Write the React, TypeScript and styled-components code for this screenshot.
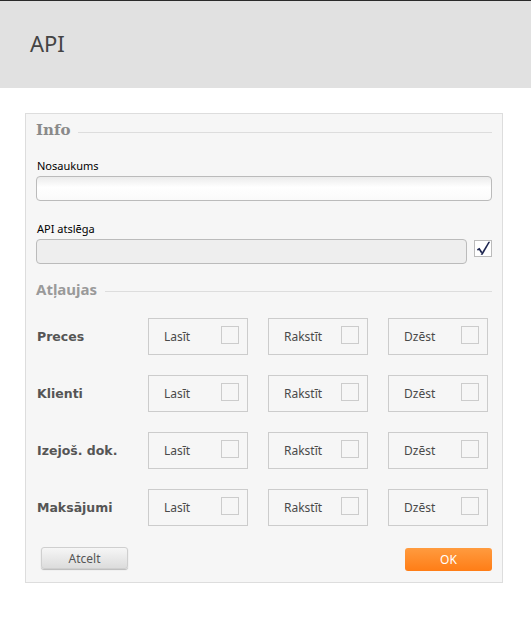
import styled, { createGlobalStyle } from "styled-components";

const GlobalStyle = createGlobalStyle`
  html, body {
    margin: 0;
    padding: 0;
    background: #fff;
    font-family: "Noto Sans", "DejaVu Sans", sans-serif;
  }
`;

const Page = styled.div`
  width: 531px;
  border-top: 1px solid #2a2a2a;
`;

const Header = styled.header`
  height: 87px;
  background-color: #e1e1e1;
  display: flex;
  align-items: center;
  padding: 0 30px;
`;

const Title = styled.h1`
  margin: 0 0 3px 0;
  font-size: 22px;
  font-weight: 400;
  color: #444;
`;

const Panel = styled.section`
  margin: 25px 0 0 25px;
  width: 456px;
  padding: 7px 10px 11px 10px;
  border: 1px solid #dddddd;
  background-color: #f6f6f6;
`;

const Legend = styled.div<{ serif?: boolean }>`
  display: flex;
  align-items: center;
  gap: 8px;
  height: 18px;
  font-family: ${({ serif }) =>
    serif ? `"DejaVu Serif", "Liberation Serif", serif` : `"Noto Sans", "DejaVu Sans", sans-serif`};
  font-size: 15px;
  font-weight: 700;
  color: ${({ serif }) => (serif ? "#8a8a8a" : "#9a9a9a")};

  &::after {
    content: "";
    flex: 1;
    height: 1px;
    margin-top: 4px;
    background-color: #dddddd;
  }
`;

const Label = styled.label<{ top: number }>`
  display: block;
  margin: ${({ top }) => top}px 0 4px 1px;
  font-size: 11px;
  line-height: 13px;
  color: #000;
`;

const TextInput = styled.input<{ locked?: boolean }>`
  box-sizing: border-box;
  display: block;
  width: 100%;
  height: 25px;
  border: 1px solid #bbbbbb;
  border-radius: 4px;
  background: ${({ locked }) =>
    locked ? "#eeeeee" : "linear-gradient(#ececec, #ffffff 45%, #fafafa)"};
  outline: none;
`;

const KeyRow = styled.div`
  display: flex;
  align-items: flex-start;
  gap: 7px;
`;

const KeyCheck = styled.div`
  box-sizing: border-box;
  flex: 0 0 18px;
  height: 17px;
  margin-top: 1px;
  border: 1px solid #bbbbbb;
  background-color: #fff;
  display: flex;
  align-items: center;
  justify-content: center;
`;

const Spacer = styled.div<{ size: number }>`
  height: ${({ size }) => size}px;
`;

const PermSection = styled.div`
  display: flex;
  flex-direction: column;
  gap: 20px;
  margin-top: 20px;
`;

const PermRow = styled.div`
  display: flex;
  align-items: center;
`;

const PermName = styled.div`
  width: 111px;
  padding-left: 1px;
  font-family: "DejaVu Sans", "Noto Sans", sans-serif;
  font-size: 12.5px;
  font-weight: 700;
  color: #555;
`;

const PermBoxes = styled.div`
  display: flex;
  gap: 20px;
`;

const PermBox = styled.label`
  box-sizing: border-box;
  width: 100px;
  height: 37px;
  border: 1px solid #cccccc;
  display: flex;
  justify-content: space-between;
  align-items: center;
  padding: 0 8px 0 15px;
  font-size: 12px;
  color: #4a4a4a;
`;

const Square = styled.span`
  box-sizing: border-box;
  width: 18px;
  height: 18px;
  margin-top: -4px;
  border: 1px solid #cccccc;
`;

const Footer = styled.div`
  display: flex;
  justify-content: space-between;
  align-items: flex-start;
  margin-top: 21px;
  padding-left: 5px;
`;

const Button = styled.button<{ primary?: boolean }>`
  width: 87px;
  height: ${({ primary }) => (primary ? 23 : 22)}px;
  margin-top: ${({ primary }) => (primary ? 1 : 0)}px;
  border-radius: 3px;
  font-family: inherit;
  font-size: 12px;
  cursor: pointer;
  border: ${({ primary }) => (primary ? "none" : "1px solid #cfcfcf")};
  color: ${({ primary }) => (primary ? "#fff" : "#555")};
  background: ${({ primary }) =>
    primary
      ? "linear-gradient(#ff9b3f, #ff7d16)"
      : "linear-gradient(#f6f6f6, #dcdcdc)"};
  box-shadow: ${({ primary }) => (primary ? "none" : "0 1px 1px rgba(0, 0, 0, 0.25)")};
`;

const PERMISSIONS = ["Preces", "Klienti", "Izejoš. dok.", "Maksājumi"];
const ACTIONS = ["Lasīt", "Rakstīt", "Dzēst"];

function CheckMark() {
  return (
    <svg width="15" height="15" viewBox="0 0 14 14">
      <path d="M1.3 8.3 L3 7.3 L5.4 11" stroke="#1d2550" strokeWidth="1.6" fill="none" />
      <path d="M4.3 12.8 L6.2 12.8 L13.2 0.6 L11.6 0.6 Z" fill="#1d2550" />
    </svg>
  );
}

export default function App() {
  return (
    <Page>
      <GlobalStyle />
      <Header>
        <Title>API</Title>
      </Header>
      <Panel>
        <Legend serif>Info</Legend>
        <Label top={20}>Nosaukums</Label>
        <TextInput />
        <Label top={21}>API atslēga</Label>
        <KeyRow>
          <TextInput locked readOnly />
          <KeyCheck>
            <CheckMark />
          </KeyCheck>
        </KeyRow>
        <Spacer size={16} />
        <Legend>Atļaujas</Legend>
        <PermSection>
          {PERMISSIONS.map((perm) => (
            <PermRow key={perm}>
              <PermName>{perm}</PermName>
              <PermBoxes>
                {ACTIONS.map((action) => (
                  <PermBox key={action}>
                    {action}
                    <Square />
                  </PermBox>
                ))}
              </PermBoxes>
            </PermRow>
          ))}
        </PermSection>
        <Footer>
          <Button>Atcelt</Button>
          <Button primary>OK</Button>
        </Footer>
      </Panel>
    </Page>
  );
}
